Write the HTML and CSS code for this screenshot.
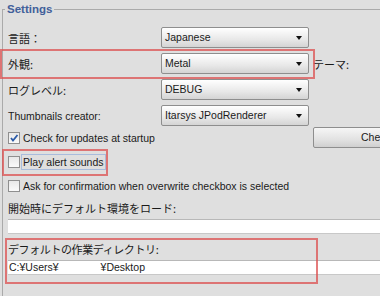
FILE: index.html
```html
<!DOCTYPE html>
<html>
<head>
<meta charset="utf-8">
<link rel="stylesheet" href="styles.css">
</head>
<body>
<div class="page">
  <fieldset class="group">
    <legend class="legend">Settings</legend>
    <div class="combos">
      <div class="row">
        <span class="label jp">言語：</span>
        <div class="combo">Japanese<span class="arrow"></span></div>
      </div>
      <div class="row">
        <span class="label jp">外観:</span>
        <div class="combo">Metal<span class="arrow"></span></div>
        <span class="extra">テーマ:</span>
      </div>
      <div class="row">
        <span class="label jp">ログレベル:</span>
        <div class="combo">DEBUG<span class="arrow"></span></div>
      </div>
      <div class="row">
        <span class="label">Thumbnails creator:</span>
        <div class="combo">Itarsys JPodRenderer<span class="arrow"></span></div>
      </div>
    </div>
    <div class="checks">
      <div class="check-row">
        <span class="box"><svg width="10" height="10" viewBox="0 0 10 10"><path d="M2 5 L4 7.5 L8.5 2" fill="none" stroke="#2a5aa8" stroke-width="1.8"/></svg></span>
        <span class="ctext">Check for updates at startup</span>
        <div class="button">Check now</div>
      </div>
      <div class="check-row">
        <span class="box"></span>
        <span class="ctext focus">Play alert sounds</span>
      </div>
      <div class="check-row">
        <span class="box"></span>
        <span class="ctext">Ask for confirmation when overwrite checkbox is selected</span>
      </div>
    </div>
    <div class="field-block">
      <div class="flabel">開始時にデフォルト環境をロード:</div>
      <div class="field"></div>
    </div>
    <div class="field-block second">
      <div class="flabel">デフォルトの作業ディレクトリ:</div>
      <div class="field">C:¥Users¥<span class="gap"></span>¥Desktop</div>
    </div>
  </fieldset>
  <div class="mark mark1"></div>
  <div class="mark mark2"></div>
  <div class="mark mark3"></div>
</div>
</body>
</html>
```
FILE: styles.css
```css
html, body {
  margin: 0;
  padding: 0;
  background: #dfdfdf;
  overflow: hidden;
}
.page {
  position: relative;
  width: 460px;
  height: 296px;
  padding-left: 2px;
  font-family: "Liberation Sans", "Noto Sans CJK JP", sans-serif;
  font-size: 10.5px;
  color: #1a1a1a;
}
.group {
  margin: 2px 0 0 0;
  padding: 0 0 0 6px;
  border: 1px solid #aaaaaa;
  border-right: none;
  border-bottom: none;
  height: 300px;
  box-sizing: border-box;
}
.legend {
  padding: 0 2px;
  margin-left: -4px;
  font-family: "Liberation Sans", sans-serif;
  font-weight: bold;
  font-size: 11.5px;
  line-height: 15px;
  color: #41609a;
}
.combos {
  display: flex;
  flex-direction: column;
  gap: 5px;
  padding-top: 10px;
}
.row {
  display: flex;
  align-items: center;
  height: 21px;
}
.label {
  flex: none;
  width: 153px;
  margin-left: -1px;
}
.label.jp {
  font-family: "Noto Sans CJK JP", sans-serif;
  font-size: 11px;
}
.combo {
  position: relative;
  width: 148px;
  height: 21px;
  box-sizing: border-box;
  border: 1px solid #8e8e8e;
  border-radius: 2px;
  background: linear-gradient(#ffffff, #e8e8e8 60%, #d4d4d4);
  padding-left: 3px;
  line-height: 19px;
}
.arrow {
  position: absolute;
  right: 6px;
  top: 8px;
  width: 0;
  height: 0;
  border-left: 3.5px solid transparent;
  border-right: 3.5px solid transparent;
  border-top: 4px solid #111;
}
.extra {
  margin-left: 4px;
  font-family: "Noto Sans CJK JP", sans-serif;
  font-size: 11px;
}
.checks {
  display: flex;
  flex-direction: column;
  gap: 3px;
  margin-top: 1px;
}
.check-row {
  display: flex;
  align-items: center;
  height: 21px;
}
.box {
  width: 12px;
  height: 12px;
  margin-left: -1px;
  box-sizing: border-box;
  border: 1px solid #8f8f8f;
  background: linear-gradient(#e8e8e8, #fafafa);
  display: flex;
  align-items: center;
  justify-content: center;
  flex: none;
}
.ctext {
  margin-left: 1px;
  padding: 1px 1px;
  border: 1px solid transparent;
  white-space: nowrap;
}
.ctext.focus {
  border-color: #a9bcdc;
}
.button {
  margin-left: auto;
  margin-right: 1px;
  width: 148px;
  height: 21px;
  box-sizing: border-box;
  border: 1px solid #8e8e8e;
  border-radius: 2px;
  background: linear-gradient(#f6f6f6, #e2e2e2 60%, #cfcfcf);
  line-height: 19px;
  text-align: center;
}
.field-block {
  margin-top: 2px;
}
.flabel {
  font-family: "Noto Sans CJK JP", sans-serif;
  font-size: 11px;
  height: 21px;
  line-height: 21px;
  margin-left: -1px;
}
.field {
  height: 15px;
  box-sizing: border-box;
  border-top: 1px solid #b8b8b8;
  border-bottom: 1px solid #c8c8c8;
  background: #ffffff;
  line-height: 13px;
  margin-left: -1px;
  padding-left: 1px;
  font-size: 10.5px;
}
.field-block.second {
  margin-top: 5px;
}
.field-block.second .flabel {
  letter-spacing: -0.4px;
}
.gap {
  display: inline-block;
  width: 42px;
}
.mark {
  position: absolute;
  border: 2px solid rgba(220, 80, 80, 0.75);
  box-sizing: border-box;
}
.mark1 { left: 0; top: 47px; width: 315px; height: 30px; }
.mark2 { left: 2px; top: 147px; width: 106px; height: 27px; }
.mark3 { left: 5px; top: 236px; width: 313px; height: 46px; }
```
